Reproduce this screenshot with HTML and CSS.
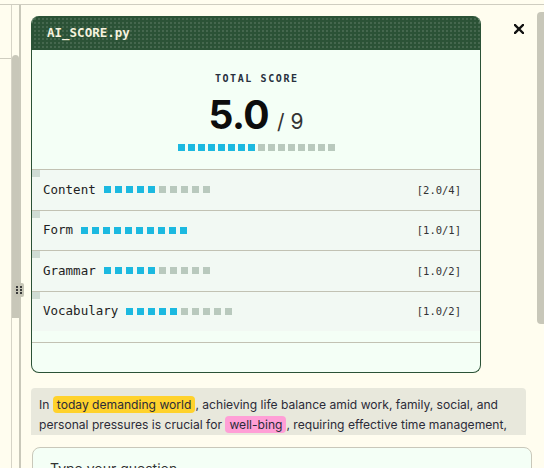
FILE: index.html
```html
<!DOCTYPE html>
<html lang="en">
<head>
<meta charset="utf-8">
<title>AI Score</title>
<link rel="stylesheet" href="styles.css">
</head>
<body>
<div class="topline"></div>
<div class="shell">
  <aside class="pane"><div class="pane-head"></div></aside>
  <div class="splitter">
    <div class="thumb"></div>
    <div class="grip"><span></span><span></span><span></span><span></span><span></span><span></span></div>
  </div>
  <main class="main">
    <div class="top-row">
      <section class="card">
        <header class="card-head">AI_SCORE.py</header>
        <div class="total">
          <div class="total-label">TOTAL SCORE</div>
          <div class="total-value"><span class="big">5.0</span><span class="of">/ 9</span></div>
          <div class="blocks total-blocks">
            <i class="on"></i><i class="on"></i><i class="on"></i><i class="on"></i><i class="on"></i><i class="on"></i><i class="on"></i><i class="on"></i>
            <i></i><i></i><i></i><i></i><i></i><i></i><i></i><i></i>
          </div>
        </div>
        <div class="rows">
          <div class="row">
            <span class="label">Content</span>
            <span class="blocks"><i class="on"></i><i class="on"></i><i class="on"></i><i class="on"></i><i class="on"></i><i></i><i></i><i></i><i></i><i></i></span>
            <span class="score">[2.0/4]</span>
          </div>
          <div class="row">
            <span class="label">Form</span>
            <span class="blocks"><i class="on"></i><i class="on"></i><i class="on"></i><i class="on"></i><i class="on"></i><i class="on"></i><i class="on"></i><i class="on"></i><i class="on"></i><i class="on"></i></span>
            <span class="score">[1.0/1]</span>
          </div>
          <div class="row">
            <span class="label">Grammar</span>
            <span class="blocks"><i class="on"></i><i class="on"></i><i class="on"></i><i class="on"></i><i class="on"></i><i></i><i></i><i></i><i></i><i></i></span>
            <span class="score">[1.0/2]</span>
          </div>
          <div class="row">
            <span class="label">Vocabulary</span>
            <span class="blocks"><i class="on"></i><i class="on"></i><i class="on"></i><i class="on"></i><i class="on"></i><i></i><i></i><i></i><i></i><i></i></span>
            <span class="score">[1.0/2]</span>
          </div>
        </div>
        <div class="card-foot"></div>
      </section>
      <button class="close" aria-label="Close">
        <svg width="10" height="10" viewBox="0 0 10 10"><path d="M1 1L9 9M9 1L1 9" stroke="#111" stroke-width="2.4" stroke-linecap="square"/></svg>
      </button>
    </div>
    <div class="essay">
      <p>In <mark class="hl-y">today demanding world</mark>, achieving life balance amid work, family, social, and personal pressures is crucial for <mark class="hl-p">well-bing</mark>, requiring effective time management, prioritizing tasks and setting boundaries.</p>
    </div>
    <div class="ask">Type your question...</div>
  </main>
  <div class="vscroll"><div class="vthumb"></div></div>
</div>
</body>
</html>
```
FILE: styles.css
```css
* { box-sizing: border-box; }
html, body { margin: 0; padding: 0; }
body {
  width: 544px;
  height: 468px;
  overflow: hidden;
  background: #fffdef;
  font-family: Inter, "Noto Sans", sans-serif;
  color: #2b2b36;
}
.topline {
  height: 5px;
  border-bottom: 1px solid #cfcdc0;
}
.shell {
  display: flex;
  height: 463px;
  overflow: hidden;
}
.pane {
  width: 12px;
  border-right: 1px solid #d6d4c7;
  flex: none;
}
.pane-head {
  height: 54px;
  border-bottom: 1px solid #cfcdc0;
}
.splitter {
  position: relative;
  width: 9px;
  flex: none;
  border-right: 2px solid #c9c8ba;
}
.thumb {
  margin-top: 50px;
  height: 263px;
  width: 7px;
  background: #c8c7b9;
  border-radius: 4px 4px 0 0;
}
.grip {
  position: absolute;
  left: 2px;
  top: 278px;
  width: 10px;
  height: 14px;
  background: #c6c5b6;
  border-radius: 2px;
  display: grid;
  grid-template-columns: 2px 2px;
  grid-auto-rows: 2px;
  gap: 1px 2px;
  align-content: center;
  justify-content: center;
}
.grip span { background: #3a3a3a; }
.main {
  flex: none;
  width: 506px;
  margin-left: 10px;
}
.top-row {
  display: flex;
  align-items: flex-start;
  padding-top: 11px;
}
.card {
  width: 450px;
  flex: none;
  background: #f4fff6;
  border: 1px solid #2b5236;
  border-top: none;
  border-radius: 8px;
  overflow: hidden;
}
.card-head {
  height: 34px;
  padding: 8px 0 0 15px;
  background-color: #2b5236;
  background-image: radial-gradient(circle, rgba(255,255,255,0.22) 0.55px, transparent 0.9px);
  background-size: 4px 4px;
  background-position: 1px 1px;
  color: #f6f2de;
  font: bold 12.5px/18px "DejaVu Sans Mono", monospace;
}
.total {
  text-align: center;
  padding-top: 23px;
  height: 119px;
}
.total-label {
  font: bold 10px/12px "DejaVu Sans Mono", monospace;
  letter-spacing: 1.6px;
  color: #28303e;
  padding-left: 1.6px;
}
.total-value {
  margin-top: 10px;
  display: flex;
  justify-content: center;
  align-items: baseline;
  gap: 8px;
  line-height: 40px;
}
.big {
  font: 700 39px/40px Inter, sans-serif;
  color: #0d0d0d;
  letter-spacing: -0.5px;
}
.of {
  font: 400 21px/24px Inter, sans-serif;
  color: #333;
}
.blocks {
  display: inline-flex;
  gap: 4px;
}
.blocks i {
  display: block;
  width: 7px;
  height: 7px;
  background: #b9c9bd;
}
.blocks i.on { background: #1cb9e0; }
.total-blocks {
  display: flex;
  justify-content: center;
  gap: 3px;
  margin-top: 9px;
}
.rows {
  background: #f2f9f3;
}
.row {
  position: relative;
  display: flex;
  align-items: center;
  height: 40.5px;
  border-top: 1px solid #c2c2b3;
  padding: 0 19px 0 11px;
  font: 12.5px/16px "DejaVu Sans Mono", monospace;
  color: #222;
}
.row::before {
  content: "";
  position: absolute;
  left: 0;
  top: 0;
  width: 8px;
  height: 7px;
  background: #cfdcd4;
}
.row .label { margin-right: 8px; }
.row .score {
  margin-left: auto;
  font-size: 10.5px;
  color: #333;
}
.card-foot {
  margin-top: 11px;
  height: 30px;
  border-top: 1px solid #c2c2b3;
}
.close {
  margin: 8px 0 0 33px;
  padding: 0;
  border: none;
  background: none;
  width: 10px;
  height: 10px;
  display: block;
}
.close svg { display: block; }
.essay {
  margin-top: 15px;
  width: 495px;
  height: 47px;
  overflow: hidden;
  background: #e8e8dc;
  border-radius: 4px 4px 0 0;
  padding: 7px 8px 0 8px;
}
.essay p {
  margin: 0;
  font-size: 12.1px;
  line-height: 20px;
  color: #2b2b38;
}
mark {
  color: inherit;
  border-radius: 4px;
  padding: 1px 4px;
}
.hl-y { background: #ffd22c; }
.hl-p { background: #ff9fd6; }
.ask {
  margin: 12px 0 0 1px;
  width: 500px;
  height: 60px;
  border: 1px solid #c9c8ba;
  border-radius: 8px;
  background: #f4fff6;
  padding: 12px 17px;
  font-size: 14px;
  color: #333;
}
.vscroll {
  flex: none;
  width: 7px;
}
.vthumb {
  margin-top: 7px;
  height: 312px;
  background: #c8c7b9;
  border-radius: 4px 0 0 4px;
}
```
